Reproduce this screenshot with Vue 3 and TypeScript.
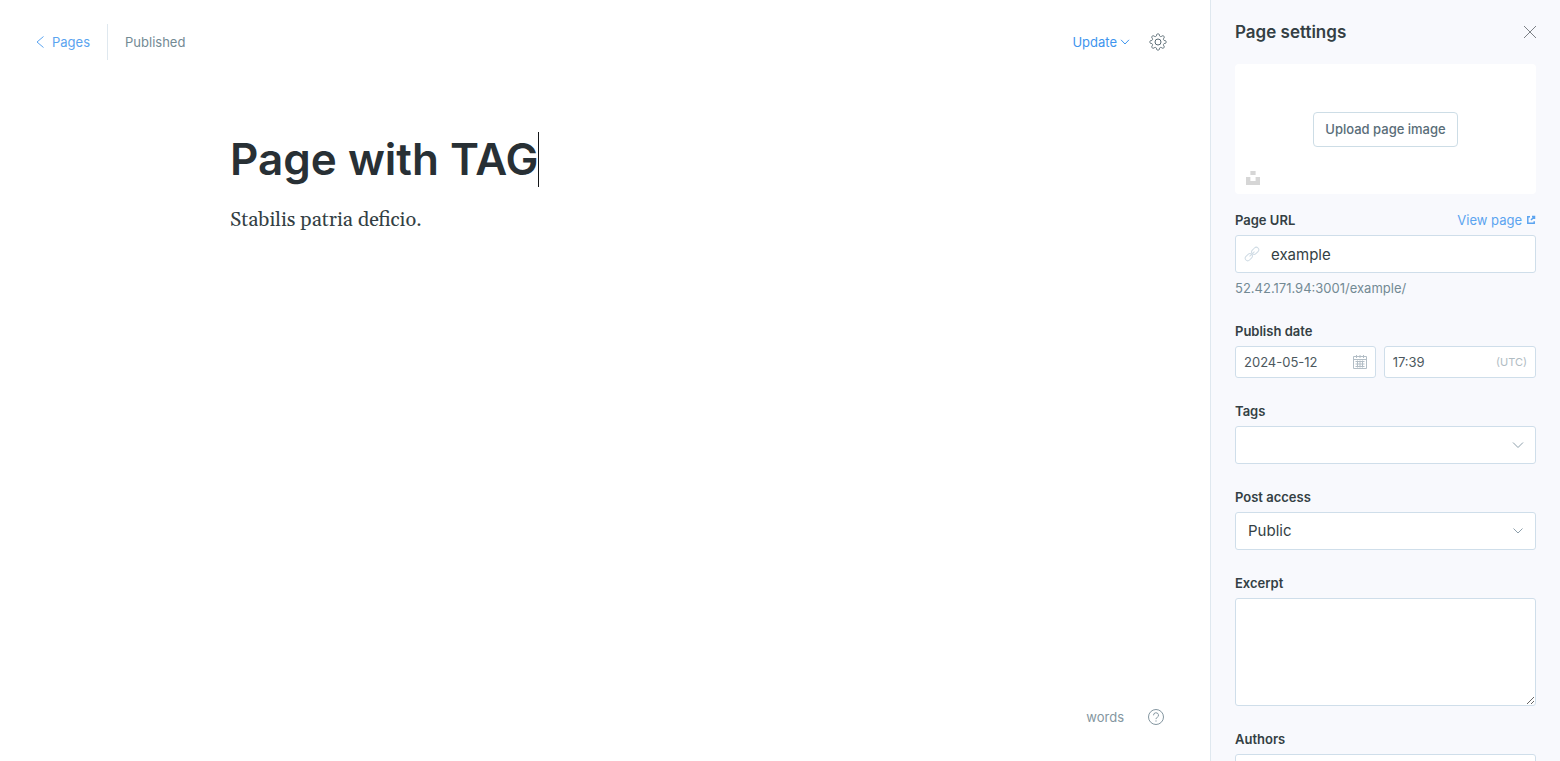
<script setup lang="ts">
import { ref } from 'vue'

const title = ref('Page with TAG')
const slug = ref('example')
const date = ref('2024-05-12')
const time = ref('17:39')
const tags = ref('')
const access = ref('Public')
const excerpt = ref('')
const authors = ref('')
const accessLevels: string[] = ['Public', 'Members only', 'Paid-members only']

// Outline of an eight-toothed gear with rounded teeth, centred in an 18px box.
function gearOutline(teeth: number, radius: number, depth: number): string {
  const steps = teeth * 16
  const points = Array.from({ length: steps }, (_, i) => {
    const angle = (i / steps) * Math.PI * 2
    const r = radius + depth * Math.tanh(1.6 * Math.cos(angle * teeth))
    return `${(9 + r * Math.sin(angle)).toFixed(2)} ${(9 - r * Math.cos(angle)).toFixed(2)}`
  })
  return `M${points.join('L')}Z`
}
const gear = gearOutline(8, 7.1, 1.2)
</script>

<template>
  <div class="layout">
    <main class="editor">
      <header class="toolbar">
        <nav class="crumbs">
          <a class="back" href="#pages">
            <svg class="icon-back" viewBox="0 0 8 14" aria-hidden="true"><path d="M7.500 1.500 1 7l6.500 5.500" /></svg>
            Pages
          </a>
          <span class="status">Published</span>
        </nav>
        <div class="actions">
          <button type="button" class="update">
            Update
            <svg class="icon-caret" viewBox="0 0 10 6" aria-hidden="true"><path d="M1 .8 5 5 9 .8" /></svg>
          </button>
          <button type="button" class="icon-button" aria-label="Settings">
            <svg class="icon-gear" viewBox="0 0 18 18" aria-hidden="true">
              <circle cx="9" cy="9" r="3" />
              <path :d="gear" />
            </svg>
          </button>
        </div>
      </header>

      <section class="canvas">
        <div class="title-row">
          <input v-model="title" class="title" type="text" aria-label="Page title" />
          <span class="cursor"></span>
        </div>
        <div class="body" contenteditable="true" spellcheck="false" role="textbox" aria-label="Page content">
          <p>Stabilis patria deficio.</p>
        </div>
      </section>

      <footer class="footer">
        <span>words</span>
        <button type="button" class="icon-button" aria-label="Help">
          <svg class="icon-help" viewBox="0 0 16 16" aria-hidden="true">
            <circle cx="8" cy="8" r="7.500" />
            <path d="M5.500 6.300a2.500 2.500 0 1 1 3.600 2.200c-.8.400-1.100.7-1.100 1.600" />
            <path d="M8 11.400v1.200" />
          </svg>
        </button>
      </footer>
    </main>

    <aside class="settings">
      <header class="settings-head">
        <h2>Page settings</h2>
        <button type="button" class="icon-button" aria-label="Close">
          <svg class="icon-close" viewBox="0 0 12 12" aria-hidden="true"><path d="m0 0 12 12M12 0 0 12" /></svg>
        </button>
      </header>

      <div class="uploader">
        <button type="button" class="upload">Upload page image</button>
        <button type="button" class="icon-button unsplash" aria-label="Unsplash">
          <svg class="icon-unsplash" viewBox="0 0 14 14" aria-hidden="true"><path d="M4.400 0h5.200v4H4.400zM0 6h4.400v4h5.200V6H14v8H0z" /></svg>
        </button>
      </div>

      <form class="fields" @submit.prevent>
        <div class="field">
          <div class="label-row">
            <label for="url">Page URL</label>
            <a class="view" href="#view">
              View page
              <svg class="icon-external" viewBox="0 0 10 10" aria-hidden="true">
                <path d="M4 1.800H1.800v6.400h6.400V6.200M6 1.500h2.500V4M8.300 1.700 5 5" />
              </svg>
            </a>
          </div>
          <div class="control">
            <svg class="icon-link" viewBox="0 0 16 16" aria-hidden="true">
              <g transform="rotate(-45 8 8)">
                <rect x="-.5" y="5.500" width="8" height="5" rx="2.500" />
                <rect x="8.500" y="5.500" width="8" height="5" rx="2.500" />
                <path d="M4.500 8h7" />
              </g>
            </svg>
            <input id="url" v-model="slug" class="box with-icon" type="text" />
          </div>
          <p class="hint">52.42.171.94:3001/example/</p>
        </div>

        <div class="field">
          <div class="label-row"><label for="date">Publish date</label></div>
          <div class="date-row">
            <div class="control">
              <input id="date" v-model="date" class="box small" type="text" />
              <svg class="icon-calendar" viewBox="0 0 14 14" aria-hidden="true">
                <path d="M.5 1.500h13v12H.5zM.5 4.500h13M3.500 0v3M7 0v3M10.500 0v3M2.500 6.500h9M2.500 9h9M2.500 11.500h9M4.500 5.500v7M7 5.500v7M9.500 5.500v7" />
              </svg>
            </div>
            <div class="control">
              <input v-model="time" class="box small" type="text" aria-label="Publish time" />
              <span class="zone">(UTC)</span>
            </div>
          </div>
        </div>

        <div class="field">
          <div class="label-row"><label for="tags">Tags</label></div>
          <div class="control">
            <input id="tags" v-model="tags" class="box" type="text" role="combobox" aria-expanded="false" />
            <svg class="icon-chevron" viewBox="0 0 12 8" aria-hidden="true"><path d="m1 1.500 5 5 5-5" /></svg>
          </div>
        </div>

        <div class="field">
          <div class="label-row"><label for="access">Post access</label></div>
          <div class="control">
            <select id="access" v-model="access" class="box">
              <option v-for="level in accessLevels" :key="level">{{ level }}</option>
            </select>
            <svg class="icon-chevron" viewBox="0 0 12 8" aria-hidden="true"><path d="m1.500 1.500 4.500 4.500 4.500-4.500" /></svg>
          </div>
        </div>

        <div class="field">
          <div class="label-row"><label for="excerpt">Excerpt</label></div>
          <textarea id="excerpt" v-model="excerpt" class="box area"></textarea>
        </div>

        <div class="field">
          <div class="label-row"><label for="authors">Authors</label></div>
          <div class="control">
            <input id="authors" v-model="authors" class="box" type="text" role="combobox" aria-expanded="false" />
          </div>
        </div>
      </form>
    </aside>
  </div>
</template>

<style>
body {
  margin: 0;
}
</style>

<style scoped>
.layout {
  display: flex;
  height: 100vh;
  overflow: hidden;
  background: #fff;
  color: #343f44;
  font-family: Inter, "Liberation Sans", sans-serif;
  font-size: 13px;
  line-height: 20px;
}
.layout *,
.layout *::before {
  box-sizing: border-box;
}
button,
input,
select,
textarea {
  margin: 0;
  font: inherit;
  color: inherit;
}
button {
  padding: 0;
  border: 0;
  background: none;
  cursor: pointer;
}
a {
  text-decoration: none;
}
svg {
  display: block;
  flex: none;
  fill: none;
  stroke: currentColor;
}

.editor {
  flex: 1;
  min-width: 0;
  display: flex;
  flex-direction: column;
}
.toolbar {
  display: flex;
  align-items: center;
  justify-content: space-between;
  padding: 24px 43px 0 36px;
}
.crumbs,
.actions {
  display: flex;
  align-items: center;
}
.back {
  display: flex;
  align-items: center;
  gap: 8px;
  padding-right: 17px;
  color: #5ba4f0;
}
.icon-back {
  width: 8px;
  height: 14px;
}
.status {
  padding: 8px 0 8px 17px;
  border-left: 1px solid #dfe8ef;
  color: #738a94;
}
.actions {
  gap: 19px;
}
.update {
  display: flex;
  align-items: center;
  gap: 3px;
  color: #3e95ee;
}
.icon-caret {
  width: 10px;
  height: 6px;
}
.icon-gear {
  width: 18px;
  height: 18px;
  color: #596a73;
}

.canvas {
  flex: 1;
  width: 100%;
  max-width: 750px;
  margin: 0 auto;
  padding-top: 72px;
}
.title-row {
  display: flex;
  color: #283035;
}
.title {
  field-sizing: content;
  min-width: 1px;
  max-width: 100%;
  padding: 0;
  border: 0;
  outline: 0;
  background: none;
  font-size: 44px;
  font-weight: 600;
  line-height: 55px;
  height: 55px;
}
.cursor {
  width: 1px;
  background: #15171a;
}
.body {
  padding-top: 16px;
  outline: 0;
  font-family: Georgia, Gelasio, "Liberation Serif", serif;
  font-size: 20px;
  line-height: 34px;
  color: #343f44;
}
.body p {
  margin: 0;
}
.footer {
  display: flex;
  align-items: center;
  justify-content: flex-end;
  gap: 24px;
  padding: 0 46px 34px;
  color: #8496a0;
}
.icon-help {
  width: 16px;
  height: 16px;
  color: #8496a0;
}

.settings {
  width: 350px;
  flex: none;
  padding: 20px 24px;
  overflow-y: auto;
  scrollbar-width: none;
  border-left: 1px solid #dfe8ef;
  background: #f8f9fd;
}
.settings-head {
  display: flex;
  align-items: center;
  justify-content: space-between;
  height: 24px;
  margin-bottom: 20px;
}
.settings-head h2 {
  margin: 0;
  font-size: 17px;
  font-weight: 600;
  line-height: 24px;
}
.icon-close {
  width: 12px;
  height: 12px;
  color: #7c8186;
}
.uploader {
  position: relative;
  display: flex;
  align-items: center;
  justify-content: center;
  height: 130px;
  margin-bottom: 16px;
  border-radius: 4px;
  background: #fff;
}
.upload {
  height: 35px;
  padding: 0 11px;
  border: 1px solid #cddde6;
  border-radius: 4px;
  color: #596d78;
  font-weight: 500;
}
.unsplash {
  position: absolute;
  left: 11px;
  bottom: 9px;
}
.icon-unsplash {
  width: 14px;
  height: 14px;
  fill: #d6d6d6;
  stroke: none;
}

.fields {
  display: flex;
  flex-direction: column;
  gap: 23px;
}
.label-row {
  display: flex;
  justify-content: space-between;
  margin-bottom: 5px;
}
label {
  font-weight: 600;
}
.view {
  display: flex;
  align-items: center;
  gap: 4px;
  color: #5ba4f0;
}
.icon-external {
  width: 10px;
  height: 10px;
  stroke-width: 1.5;
}
.control {
  position: relative;
  display: flex;
}
.box {
  display: block;
  width: 100%;
  min-width: 0;
  height: 38px;
  padding: 0 12px;
  border: 1px solid #cfdeea;
  border-radius: 3px;
  outline: 0;
  background: #fff;
  appearance: none;
  font-size: 15px;
}
.box.with-icon {
  padding-left: 35px;
}
.box.small {
  height: 32px;
  padding: 0 8px;
  font-size: 13px;
  color: #4c585e;
}
.box.area {
  height: 108px;
  padding: 8px 12px;
  resize: vertical;
}
.hint {
  margin: 5px 0 0;
  color: #738a94;
}
.date-row {
  display: grid;
  grid-template-columns: 12fr 13fr;
  gap: 8px;
}
.icon-link,
.icon-calendar,
.icon-chevron,
.zone {
  position: absolute;
  top: 50%;
  transform: translateY(-50%);
  pointer-events: none;
}
.icon-link {
  left: 9px;
  width: 16px;
  height: 16px;
  color: #cfdbe4;
}
.icon-calendar {
  right: 9px;
  width: 14px;
  height: 14px;
  color: #b3bec6;
}
.icon-chevron {
  right: 12px;
  width: 12px;
  height: 8px;
  color: #8d9fab;
}
.zone {
  right: 9px;
  font-size: 11px;
  color: #b0bcc3;
}
</style>
